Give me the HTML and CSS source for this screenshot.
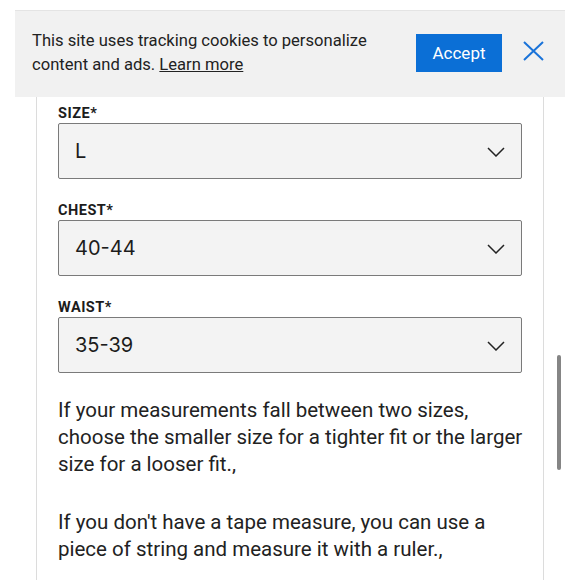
FILE: index.html
```html
<!DOCTYPE html>
<html lang="en">
<head>
<meta charset="utf-8">
<title>Size form</title>
<link rel="stylesheet" href="styles.css">
</head>
<body>
<main class="card">
  <div class="field">
    <label class="label">SIZE*</label>
    <div class="select"><span class="value">L</span>
      <svg class="chev" viewBox="0 0 18 10" width="18" height="10"><path d="M1 1 L9 9 L17 1" fill="none" stroke="#222" stroke-width="1.5"/></svg>
    </div>
  </div>
  <div class="field">
    <label class="label">CHEST*</label>
    <div class="select"><span class="value">40-44</span>
      <svg class="chev" viewBox="0 0 18 10" width="18" height="10"><path d="M1 1 L9 9 L17 1" fill="none" stroke="#222" stroke-width="1.5"/></svg>
    </div>
  </div>
  <div class="field">
    <label class="label">WAIST*</label>
    <div class="select"><span class="value">35-39</span>
      <svg class="chev" viewBox="0 0 18 10" width="18" height="10"><path d="M1 1 L9 9 L17 1" fill="none" stroke="#222" stroke-width="1.5"/></svg>
    </div>
  </div>
  <p class="note">If your measurements fall between two sizes, choose the smaller size for a tighter fit or the larger size for a looser fit.,</p>
  <p class="note">If you don't have a tape measure, you can use a piece of string and measure it with a ruler.,</p>
</main>

<div class="cookie">
  <p class="cookie-text">This site uses tracking cookies to personalize content and ads. <a href="#" class="learn">Learn more</a></p>
  <button class="accept">Accept</button>
  <button class="close" aria-label="Close">
    <svg viewBox="0 0 21 20" width="21" height="20"><path d="M1 1 L20 19 M20 1 L1 19" fill="none" stroke="#1a73d9" stroke-width="2"/></svg>
  </button>
</div>

<div class="scrollbar"></div>
</body>
</html>
```

FILE: styles.css
```css
html, body {
  margin: 0;
  padding: 0;
  background: #ffffff;
  height: 580px;
  overflow: hidden;
}

body {
  font-family: Roboto, "Liberation Sans", sans-serif;
  color: #222;
}

.card {
  margin: 10px 0 0 36px;
  border-left: 1px solid #dcdcdc;
  border-right: 1px solid #dcdcdc;
  padding: 95px 21px 0 21px;
  box-sizing: content-box;
  width: 464px;
  min-height: 600px;
}

.field {
  margin-bottom: 23px;
}

.label {
  display: block;
  font-size: 14.5px;
  font-weight: 700;
  line-height: 18px;
  letter-spacing: 0.5px;
  color: #1c1c1c;
  margin-bottom: 0;
}

.select {
  height: 56px;
  box-sizing: border-box;
  border: 1px solid #7a7a7a;
  border-radius: 2px;
  background: #f3f3f3;
  display: flex;
  align-items: center;
  justify-content: space-between;
  padding: 0 16px 0 16px;
}

.value {
  font-family: Inter, Roboto, sans-serif;
  font-size: 20px;
  color: #1c1c1c;
}

.chev {
  display: block;
  margin-top: 1px;
}

.field:last-of-type {
  margin-bottom: 24px;
}

.note {
  font-size: 20.5px;
  line-height: 27px;
  margin: 0 -8px 31px 0;
  color: #222;
}

.cookie {
  position: absolute;
  top: 10px;
  left: 15px;
  width: 550px;
  height: 87px;
  box-sizing: border-box;
  background: #f1f1f1;
  border-top: 1px solid #e4e4e4;
  display: flex;
  align-items: center;
  padding: 0 21px 0 17px;
}

.cookie-text {
  margin: -2px 0 0 0;
  font-size: 16.6px;
  line-height: 24px;
  width: 370px;
  color: #222;
}

.learn {
  color: #222;
  text-decoration: underline;
}

.accept {
  margin-left: auto;
  width: 86px;
  height: 38px;
  border: none;
  background: #0b6fd6;
  color: #fff;
  font-family: Roboto, sans-serif;
  font-size: 17px;
  padding: 0;
  margin-top: -2px;
}

.close {
  margin-left: 21px;
  background: none;
  border: none;
  padding: 0;
  width: 21px;
  height: 20px;
  margin-top: -6px;
}

.close svg {
  display: block;
}

.scrollbar {
  position: absolute;
  left: 557px;
  top: 355px;
  width: 4px;
  height: 115px;
  border-radius: 2px;
  background: #858585;
}
```
